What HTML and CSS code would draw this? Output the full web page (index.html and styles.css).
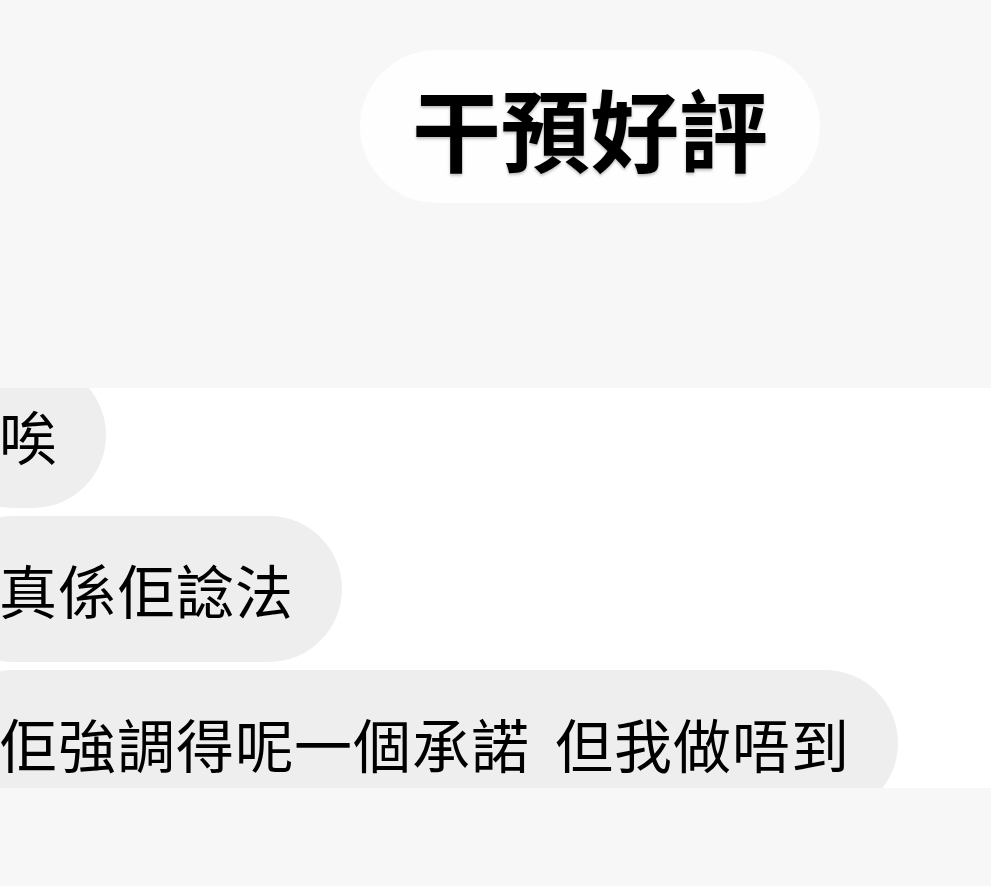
FILE: index.html
```html
<!DOCTYPE html>
<html lang="zh-Hant">
<head>
<meta charset="utf-8">
<title>干預好評</title>
<link rel="stylesheet" href="styles.css">
</head>
<body>
  <header class="top">
    <div class="pill">干預好評</div>
  </header>
  <main class="chat">
    <div class="list">
      <div class="bubble">唉</div>
      <div class="bubble">真係佢諗法</div>
      <div class="bubble">佢強調得呢一個承諾 但我做唔到</div>
    </div>
  </main>
  <footer class="bottom"></footer>
</body>
</html>
```

FILE: styles.css
```css
html, body {
  margin: 0;
  padding: 0;
  width: 991px;
  height: 886px;
  overflow: hidden;
  background: #f7f7f7;
  font-family: "Noto Sans CJK TC", "Noto Sans CJK SC", "Noto Sans", sans-serif;
  color: #000;
}

.top {
  height: 388px;
  background: #f7f7f7;
  display: flex;
  align-items: flex-start;
  padding-top: 50px;
  padding-left: 360px;
  box-sizing: border-box;
}

.pill {
  background: #fefefe;
  height: 153px;
  line-height: 153px;
  padding: 0 52px;
  border-radius: 77px;
  font-size: 89px;
  font-weight: 700;
  white-space: nowrap;
  text-shadow: 0 2px 3px rgba(0, 0, 0, 0.25);
}

.chat {
  height: 400px;
  background: #ffffff;
  overflow: hidden;
}

.list {
  margin-top: -26px;
  display: flex;
  flex-direction: column;
  align-items: flex-start;
  gap: 8px;
}

.bubble {
  background: #eeeeee;
  height: 146px;
  line-height: 146px;
  font-size: 58px;
  letter-spacing: 1px;
  word-spacing: 11px;
  margin-left: -60px;
  padding: 0 48px 0 59px;
  border-radius: 73px;
  white-space: pre;
}

.bottom {
  height: 98px;
  background: #f7f7f7;
}
```
